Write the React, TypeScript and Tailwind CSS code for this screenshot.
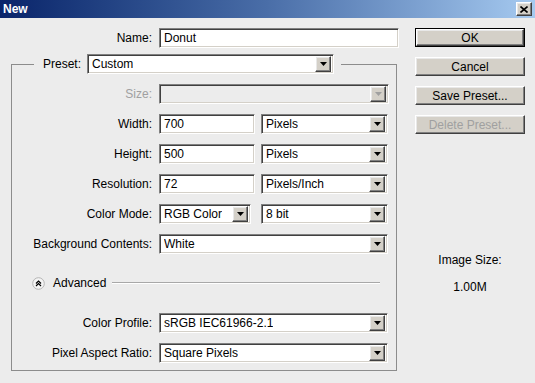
import React from 'react';

const sunken =
  'border border-t-[#808080] border-l-[#808080] border-b-white border-r-white shadow-[inset_1px_1px_0_#404040,inset_-1px_-1px_0_#d4d0c8]';
const raised =
  'border border-t-white border-l-white border-b-[#404040] border-r-[#404040] shadow-[inset_-1px_-1px_0_#808080,inset_1px_1px_0_#e8e8e8]';

function ArrowButton({ disabled }: { disabled?: boolean }) {
  return (
    <div className={`w-[16px] h-[16px] bg-[#d4d0c8] flex items-center justify-center ${raised}`}>
      <svg width="7" height="4" viewBox="0 0 7 4">
        <path d="M0 0h7L3.5 4z" fill={disabled ? '#a0a0a0' : '#000'} />
      </svg>
    </div>
  );
}

function Dropdown({ value, width, disabled }: { value: string; width: string; disabled?: boolean }) {
  return (
    <div
      className={`${width} h-[20px] flex items-center justify-between pl-[4px] pr-[2px] ${sunken} ${
        disabled ? 'bg-[#ececec]' : 'bg-white'
      }`}
    >
      <span className="truncate">{value}</span>
      <ArrowButton disabled={disabled} />
    </div>
  );
}

function Field({ value, width }: { value: string; width: string }) {
  return (
    <div className={`${width} h-[20px] flex items-center pl-[4px] bg-white ${sunken}`}>
      {value}
    </div>
  );
}

function Row({ label, muted, children }: { label: string; muted?: boolean; children: React.ReactNode }) {
  return (
    <div className="flex items-center h-[20px]">
      <div className={`w-[140px] mr-[7px] text-right ${muted ? 'text-[#a0a0a0]' : ''}`}>{label}</div>
      <div className="flex items-center gap-[6px]">{children}</div>
    </div>
  );
}

function Button({ label, primary, disabled }: { label: string; primary?: boolean; disabled?: boolean }) {
  return (
    <div className={`w-[110px] h-[19px] ${primary ? 'border border-black' : ''}`}>
      <div
        className={`h-full w-full bg-[#d4d0c8] flex items-center justify-center ${raised} ${
          disabled ? 'text-[#a0a0a0]' : ''
        }`}
      >
        {label}
      </div>
    </div>
  );
}

export default function App() {
  return (
    <div className="w-[535px] h-[383px] bg-[#ececec] overflow-hidden text-[12px] text-black font-['Liberation_Sans',Arial,sans-serif]">
      {/* title bar */}
      <div className="h-[18px] flex items-center justify-between pl-[3px] pr-[3px] bg-linear-to-r from-[#0a246a] via-[#4a6ea8] to-[#a6caf0]">
        <span className="text-white font-bold text-[12px]">New</span>
        <div className={`w-[16px] h-[14px] bg-[#d4d0c8] flex items-center justify-center ${raised}`}>
          <svg width="8" height="7" viewBox="0 0 8 7">
            <path d="M0.5 0.5L7.5 6.5M7.5 0.5L0.5 6.5" stroke="#000" strokeWidth="1.6" />
          </svg>
        </div>
      </div>

      <div className="flex">
        {/* form */}
        <div className="w-[405px]">
          <div className="flex items-center mt-[10px] h-[20px]">
            <div className="w-[152px] mr-[7px] text-right">Name:</div>
            <Field value="Donut" width="w-[240px]" />
          </div>

          <fieldset className="ml-[11px] mt-[6px] w-[386px] border border-[#8c8c8c] px-0 pb-[7px]">
            <legend className="ml-[22px] pl-[3px] pr-[7px] flex items-center h-[20px]">
              <span className="ml-[6px] mr-[6px]">Preset:</span>
              <Dropdown value="Custom" width="w-[247px]" />
            </legend>

            <div className="flex flex-col gap-[10px] pt-[10px]">
              <Row label="Size:" muted>
                <Dropdown value="" width="w-[230px]" disabled />
              </Row>
              <Row label="Width:">
                <Field value="700" width="w-[96px]" />
                <Dropdown value="Pixels" width="w-[127px]" />
              </Row>
              <Row label="Height:">
                <Field value="500" width="w-[96px]" />
                <Dropdown value="Pixels" width="w-[127px]" />
              </Row>
              <Row label="Resolution:">
                <Field value="72" width="w-[96px]" />
                <Dropdown value="Pixels/Inch" width="w-[127px]" />
              </Row>
              <Row label="Color Mode:">
                <Dropdown value="RGB Color" width="w-[92px]" />
                <div className="ml-[4px]">
                  <Dropdown value="8 bit" width="w-[127px]" />
                </div>
              </Row>
              <Row label="Background Contents:">
                <Dropdown value="White" width="w-[229px]" />
              </Row>
            </div>

            <div className="flex items-center h-[20px] mt-[19px] pl-[20px] pr-[16px]">
              <svg width="13" height="13" viewBox="0 0 13 13">
                <circle cx="6.5" cy="6.5" r="5.8" fill="#f4f4f4" stroke="#b4b4b4" />
                <path d="M4 6.5L6.5 4L9 6.5M4 9L6.5 6.5L9 9" fill="none" stroke="#000" strokeWidth="1.2" />
              </svg>
              <span className="ml-[8px]">Advanced</span>
              <div className="flex-1 ml-[6px] h-[2px] border-t border-[#a8a8a8] border-b border-b-white" />
            </div>

            <div className="flex flex-col gap-[10px] mt-[20px]">
              <Row label="Color Profile:">
                <Dropdown value="sRGB IEC61966-2.1" width="w-[229px]" />
              </Row>
              <Row label="Pixel Aspect Ratio:">
                <Dropdown value="Square Pixels" width="w-[229px]" />
              </Row>
            </div>
          </fieldset>
        </div>

        {/* buttons */}
        <div className="ml-[10px] pt-[10px] flex flex-col">
          <div className="flex flex-col gap-[10px]">
            <Button label="OK" primary />
            <Button label="Cancel" />
            <Button label="Save Preset..." />
            <Button label="Delete Preset..." disabled />
          </div>
          <div className="mt-[117px] flex flex-col items-center gap-[9px] w-[110px]">
            <span>Image Size:</span>
            <span>1.00M</span>
          </div>
        </div>
      </div>
    </div>
  );
}
